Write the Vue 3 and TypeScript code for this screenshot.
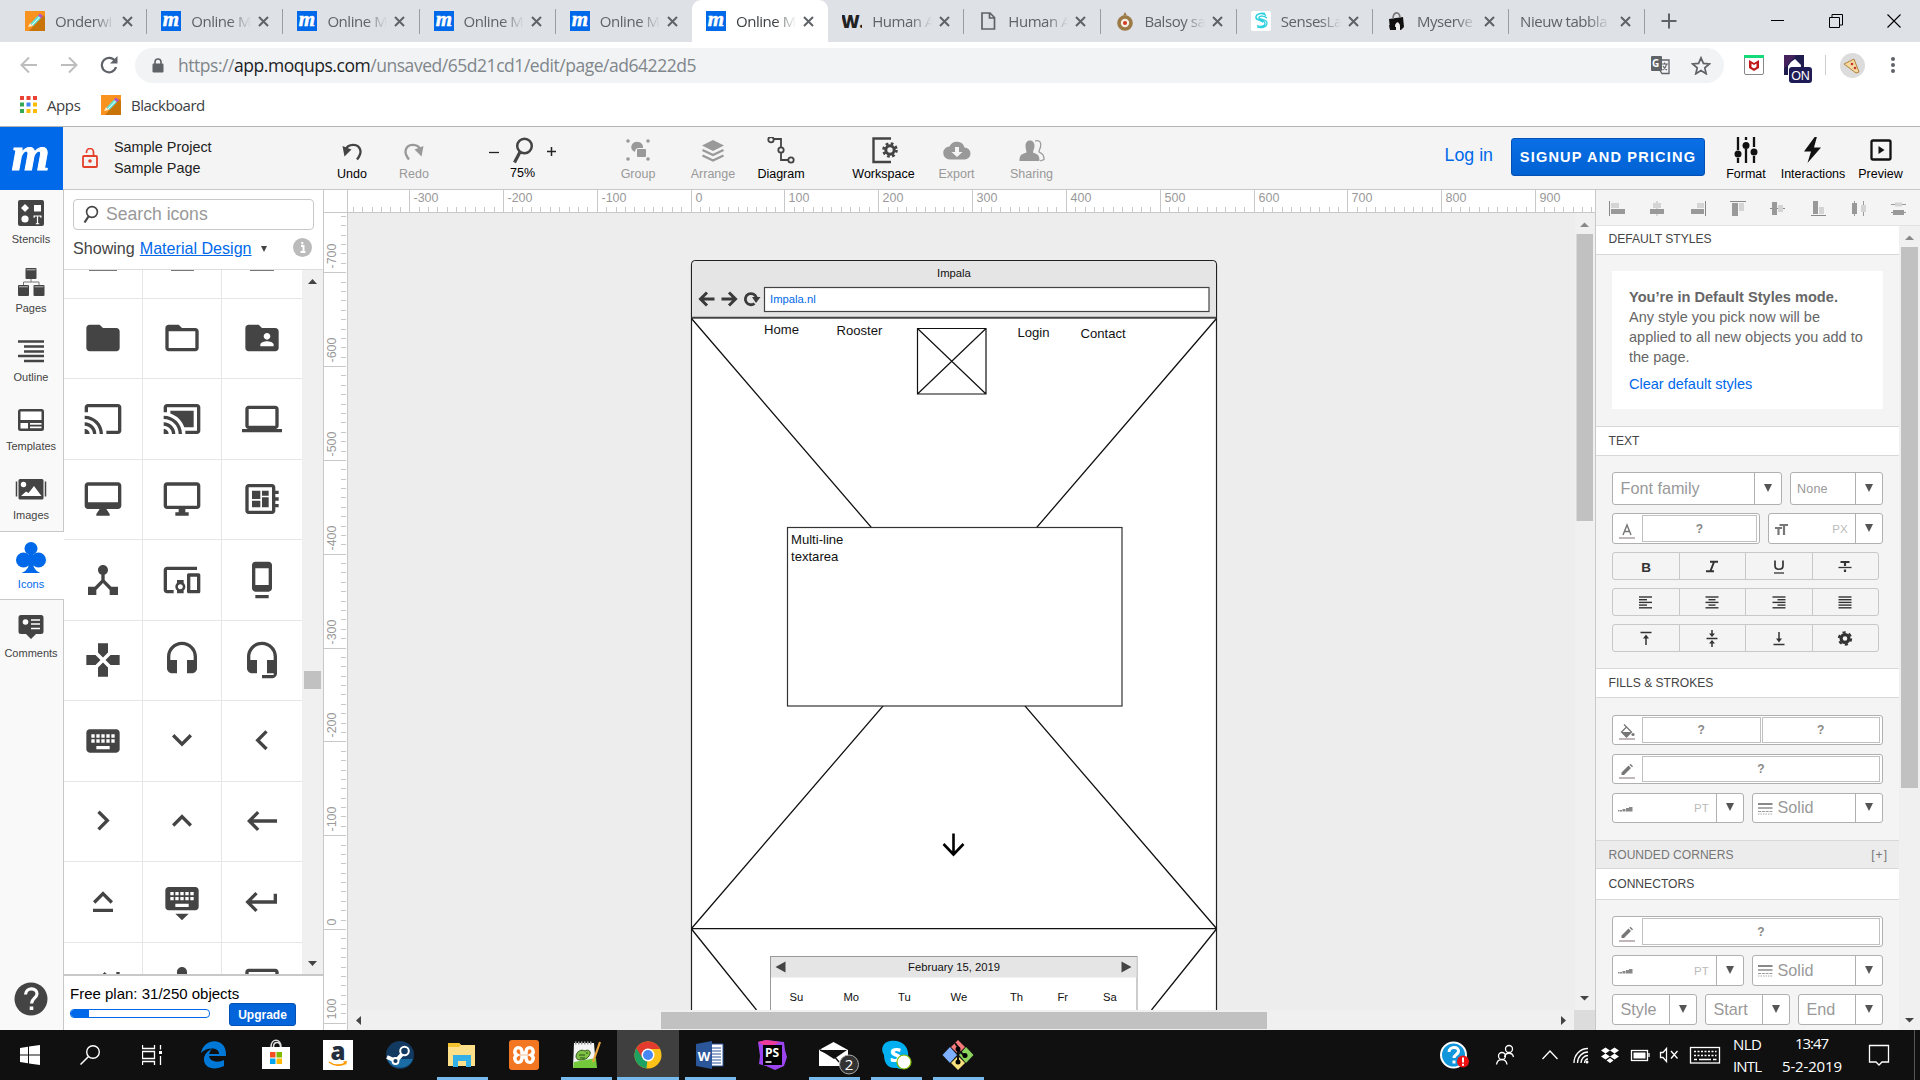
<script setup lang="ts">
interface Tab { title: string; icon: string; active?: boolean; line?: boolean }
interface Tool { key: string; label: string; icon: string; off?: boolean }

const mFav = '<rect width="20" height="20" fill="#0069ea"/><text x="10" y="15" text-anchor="middle" font-family="Liberation Serif" font-weight="700" font-style="italic" font-size="21" fill="#fff" stroke="#fff" stroke-width=".5">m</text>'
const pencilFav = '<rect width="20" height="20" fill="#f7931e"/><path d="M4 20 18 4l2 2v14z" fill="#c87408"/><path d="M3 16l2-4 3 3z" fill="#ffe9c4"/><path d="M5.5 12.500 13 4.500l3 2.800L8.300 15z" fill="#5fe0d8"/><path d="M7 14 15 5.500" stroke="#fff" stroke-width="1"/><path d="M13 4.500l2-2 3 2.500-2 2.300z" fill="#b455c9"/>'

const tabs: Tab[] = [
  { title: 'Onderwi', icon: pencilFav, line: true },
  { title: 'Online M', icon: mFav, line: true },
  { title: 'Online M', icon: mFav, line: true },
  { title: 'Online M', icon: mFav, line: true },
  { title: 'Online M', icon: mFav },
  { title: 'Online M', icon: mFav, active: true },
  { title: 'Human A', icon: '<text x="-1" y="17" font-family="Open Sans" font-weight="800" font-size="18" letter-spacing="-.5" fill="#222">W.</text>', line: true },
  { title: 'Human A', icon: '<path d="M4 2h8l4.500 4.500V18H4zM11.500 2v5h5" fill="none" stroke="#5f6368" stroke-width="1.700"/>', line: true },
  { title: 'Balsoy sa', icon: '<path d="M10 1l2 3.500h-4z" fill="#9c7a46"/><circle cx="10" cy="12" r="6" fill="#f5eee4" stroke="#9c7a46" stroke-width="3.600"/><circle cx="10" cy="12" r="2" fill="#d33a22"/>', line: true },
  { title: 'SensesLa', icon: '<rect width="20" height="20" rx="2" fill="#fff"/><path d="M15 4.500c-3-3-11-2-10 2 .5 3 9 2 9 6 0 3-5 3.500-8 2M16 7c-3-3-9-2-8 0 1 2 8 1 8 5 0 5-7 5-10 4M14 2.500c-5-1-10 1-9 5 1 2 6 2 7 4" fill="none" stroke="#2fd0df" stroke-width="1.300"/>', line: true },
  { title: 'Myserve', icon: '<path d="M2 8l14-2 1 10-3 3L3 18z" fill="#111"/><path d="M6 8c0-8 7-8 7-1" fill="none" stroke="#777" stroke-width="1.600"/><path d="M8 19v-4c1-5 4-5 5 0v4z" fill="#eee"/><path d="M2 14l7 2v3H3z" fill="#111"/>', line: true },
  { title: 'Nieuw tabbla', icon: '', line: true },
]

const tools: Tool[] = [
  { key: 'undo', label: 'Undo', icon: '<path d="M7 13.500C10 6 21 6 22.500 14c.3 3-1.500 6-3.500 8.500" fill="none" stroke="#444" stroke-width="2.300"/><path d="M4.500 9l9 3.500-7 7z" fill="#444"/>' },
  { key: 'redo', label: 'Redo', off: true, icon: '<path d="M21 13.500C18 6 7 6 5.500 14c-.3 3 1.500 6 3.500 8.500" fill="none" stroke="#999" stroke-width="2.300"/><path d="M23.500 9l-9 3.500 7 7z" fill="#999"/>' },
]
const midTools: Tool[] = [
  { key: 'group', label: 'Group', off: true, icon: '<path d="M14 5a5 5 0 0 1 5 5v1h-4a4 4 0 0 0-4 4 5 5 0 0 1 3-10z" fill="#999"/><rect x="13" y="12" width="9" height="8" rx="1" fill="#999"/><g fill="#999"><circle cx="4" cy="4" r="1.800"/><circle cx="24" cy="4" r="1.800"/><circle cx="4" cy="22" r="1.800"/><circle cx="24" cy="22" r="1.800"/></g>' },
  { key: 'arrange', label: 'Arrange', off: true, icon: '<path d="M14 3l11 5.500L14 14 3 8.500z" fill="#999"/><path d="M3.500 13l10.500 5L24.500 13M3.500 18.500l10.500 5 10.500-5" fill="none" stroke="#999" stroke-width="2.400"/>' },
  { key: 'diagram', label: 'Diagram', icon: '<path d="M6 2h8v21h8" fill="none" stroke="#444" stroke-width="1.800"/><g fill="#f4f4f4" stroke="#444" stroke-width="1.800"><circle cx="4" cy="2.700" r="2.700"/><circle cx="14" cy="13" r="2.700"/><circle cx="24" cy="23" r="2.700"/></g>' },
  { key: 'workspace', label: 'Workspace', icon: '<path d="M21 1.500H3.500v23.500H21" fill="none" stroke="#444" stroke-width="2.400"/><circle cx="20" cy="13" r="4.200" fill="none" stroke="#444" stroke-width="3"/><circle cx="20" cy="13" r="6.500" fill="none" stroke="#444" stroke-width="2.600" stroke-dasharray="2.700 2.400"/>' },
  { key: 'export', label: 'Export', off: true, icon: '<path d="M21.500 10.500A8 8 0 0 0 6.500 9.500 6.500 6.500 0 0 0 7 22.500h14.500a6 6 0 0 0 0-12z" fill="#999"/><path d="M12 10h4v5h3.500L14 20l-5.500-5H12z" fill="#f4f4f4"/>' },
  { key: 'sharing', label: 'Sharing', off: true, icon: '<path d="M17 4c5-1.500 6.500 2 5.500 6-.5 2-1.500 3-1.500 5 4 2 5 3 5 7.500l-4 1.500" fill="#f4f4f4" stroke="#999" stroke-width="1.200"/><path d="M7.500 9c-.5-7.500 9.500-7.500 9 0-.2 3-1.200 4-1.500 6.500 5.500 2 6.500 3 6.500 8.500h-20c0-5.500 1-6.500 7-8.500-.3-2.500-.8-3.500-1-6.500z" fill="#999"/>' },
]
const rightTools: Tool[] = [
  { key: 'format', label: 'Format', icon: '<path d="M6 0v13M6 21v5M14 0v3M14 12v14M22 0v10M22 19v7" stroke="#111" stroke-width="2.300"/><g fill="#111"><circle cx="6" cy="17" r="3.500"/><circle cx="14" cy="8.500" r="3.500"/><circle cx="22" cy="15" r="3.500"/></g>' },
  { key: 'interactions', label: 'Interactions', icon: '<path d="M16-.5 5 14.500h7L8.500 26 22 10.500h-7L18-.5z" fill="#111"/>' },
  { key: 'preview', label: 'Preview', icon: '<rect x="4.500" y="3.500" width="19" height="19" rx="1.500" fill="none" stroke="#111" stroke-width="2.300"/><path d="M11.500 9l6 4-6 4z" fill="#111"/>' },
]

const rail = [
  { label: 'Stencils', icon: '<rect x="3" y="2" width="26" height="26" rx="2" fill="#444"/><g fill="#fff"><path d="M10 6l4 4-4 4-4-4z"/><rect x="19" y="7" width="7" height="6.500"/><circle cx="10" cy="21" r="3.600"/><path d="M18.500 17.500h8v2.200h-1l-.5-1.200h-1.900v6.500l1.200.5v.8h-3.600v-.8l1.200-.5v-6.500H20l-.5 1.200h-1z"/></g>' },
  { label: 'Pages', icon: '<g fill="#444"><rect x="10.500" y="1" width="11" height="11" rx="1"/><rect x="3" y="18" width="11" height="11" rx="1"/><rect x="18.500" y="18" width="11" height="11" rx="1"/></g><path d="M16 12v3M8.500 18v-3h15.500v3" fill="none" stroke="#777" stroke-width="1"/><path d="M11.500 2.800h9M4 19.800h9M19.500 19.800h9" stroke="#ddd" stroke-width=".8"/>' },
  { label: 'Outline', icon: '<path d="M3 5.500h26M9 10.500h20M9 15.500h20M3 20h26M9 25h20" stroke="#444" stroke-width="2.400"/>' },
  { label: 'Templates', icon: '<rect x="3" y="4" width="26" height="22" rx="2.500" fill="#444"/><g fill="#fff"><rect x="5.500" y="6.500" width="21" height="8.500"/><rect x="5.500" y="18" width="7.500" height="5.500"/><rect x="15" y="18" width="11.500" height="1.700"/><rect x="15" y="21.500" width="11.500" height="1.700"/></g>' },
  { label: 'Images', icon: '<rect x="3.500" y="5" width="25" height="20.500" rx="1.500" fill="#444"/><path d="M1.500 7.500v15M30.500 7.500v15" stroke="#444" stroke-width="1.500"/><circle cx="8.500" cy="10.500" r="2.700" fill="#fff"/><path d="M6 22l5-4.500 2.500 1.500 5.500-7 7.500 10z" fill="#fff"/>' },
  { label: 'Icons', active: true, icon: '<g fill="#0069ea"><circle cx="16" cy="6.500" r="6.500"/><circle cx="8.500" cy="18" r="7.500"/><circle cx="23.500" cy="18" r="7.500"/><path d="M14 10h4l.5 14c1.500 4 3.500 5.500 7 7h-19c3.500-1.500 5.500-3 7-7z"/></g>' },
  { label: 'Comments', icon: '<path d="M6 3h20q2.500 0 2.500 2.500v14Q28.500 22 26 22h-5l-5 5-5-5H6q-2.500 0-2.500-2.500v-14Q3.500 3 6 3z" fill="#444"/><circle cx="10.500" cy="10" r="2.800" fill="#fff"/><path d="M16 8h9M16 12h9M16 16.500h9" stroke="#fff" stroke-width="1.300"/>' },
]

const glyphRows: string[][] = [
  [
    'M10 4H4c-1.100 0-1.990.9-1.990 2L2 18c0 1.100.9 2 2 2h16c1.100 0 2-.9 2-2V8c0-1.100-.9-2-2-2h-8l-2-2z',
    'M20 6h-8l-2-2H4c-1.100 0-1.990.9-1.990 2L2 18c0 1.100.9 2 2 2h16c1.100 0 2-.9 2-2V8c0-1.100-.9-2-2-2zm0 12H4V8h16v10z',
    'M20 6h-8l-2-2H4c-1.100 0-1.990.9-1.990 2L2 18c0 1.100.9 2 2 2h16c1.100 0 2-.9 2-2V8c0-1.100-.9-2-2-2zm-5 3c1.100 0 2 .9 2 2s-.9 2-2 2-2-.9-2-2 .9-2 2-2zm4 8h-8v-1c0-1.330 2.670-2 4-2s4 .67 4 2v1z',
  ],
  [
    'M21 3H3c-1.100 0-2 .9-2 2v3h2V5h18v14h-7v2h7c1.100 0 2-.9 2-2V5c0-1.100-.9-2-2-2zM1 18v3h3c0-1.660-1.340-3-3-3zm0-4v2c2.760 0 5 2.240 5 5h2c0-3.870-3.130-7-7-7zm0-4v2c4.970 0 9 4.030 9 9h2c0-6.080-4.930-11-11-11z',
    'M1 18v3h3c0-1.660-1.340-3-3-3zm0-4v2c2.760 0 5 2.240 5 5h2c0-3.870-3.130-7-7-7zm18-7H5v1.630c3.960 1.280 7.090 4.410 8.370 8.370H19V7zM1 10v2c4.970 0 9 4.030 9 9h2c0-6.080-4.930-11-11-11zm20-7H3c-1.100 0-2 .9-2 2v3h2V5h18v14h-7v2h7c1.100 0 2-.9 2-2V5c0-1.100-.9-2-2-2z',
    'M20 18c1.100 0 1.990-.9 1.990-2L22 6c0-1.100-.9-2-2-2H4c-1.100 0-2 .9-2 2v10c0 1.100.9 2 2 2H0v2h24v-2h-4zM4 6h16v10H4V6z',
  ],
  [
    'M21 2H3c-1.100 0-2 .9-2 2v12c0 1.100.9 2 2 2h7l-2 3v1h8v-1l-2-3h7c1.100 0 2-.9 2-2V4c0-1.100-.9-2-2-2zm0 12H3V4h18v10z',
    'M21 2H3c-1.100 0-2 .9-2 2v12c0 1.100.9 2 2 2h7v2H8v2h8v-2h-2v-2h7c1.100 0 2-.9 2-2V4c0-1.100-.9-2-2-2zm0 14H3V4h18v12z',
    'M22 9V7h-2V5c0-1.100-.9-2-2-2H4c-1.100 0-2 .9-2 2v14c0 1.100.9 2 2 2h14c1.100 0 2-.9 2-2v-2h2v-2h-2v-2h2v-2h-2V9h2zm-4 10H4V5h14v14zM6 13h5v4H6zm6-6h4v3h-4zM6 7h5v5H6zm6 4h4v6h-4z',
  ],
  [
    'M17 16l-4-4V8.820C14.160 8.400 15 7.300 15 6c0-1.660-1.340-3-3-3S9 4.340 9 6c0 1.300.84 2.400 2 2.820V12l-4 4H3v5h5v-3.050l4-4.200 4 4.200V21h5v-5h-4z',
    'M3 6h18V4H3c-1.100 0-2 .9-2 2v12c0 1.100.9 2 2 2h4v-2H3V6zm10 6H9v1.780c-.61.55-1 1.330-1 2.220s.39 1.670 1 2.220V20h4v-1.780c.61-.55 1-1.340 1-2.220s-.39-1.670-1-2.220V12zm-2 5.500c-.83 0-1.500-.67-1.500-1.500s.67-1.500 1.500-1.500 1.500.67 1.500 1.500-.67 1.500-1.500 1.500zM22 8h-6c-.5 0-1 .5-1 1v10c0 .5.5 1 1 1h6c.5 0 1-.5 1-1V9c0-.5-.5-1-1-1zm-1 10h-4v-8h4v8z',
    'M8 23h8v-2H8v2zm8-21.990L8 1c-1.100 0-2 .9-2 2v14c0 1.100.9 2 2 2h8c1.100 0 2-.9 2-2V3c0-1.100-.9-1.990-2-1.990zM16 15H8V5h8v10z',
  ],
  [
    'M15 7.500V2H9v5.500l3 3 3-3zM7.500 9H2v6h5.500l3-3-3-3zM9 16.500V22h6v-5.500l-3-3-3 3zM16.500 9l-3 3 3 3H22V9h-5.500z',
    'M12 1c-4.970 0-9 4.030-9 9v7c0 1.660 1.340 3 3 3h3v-8H5v-2c0-3.870 3.130-7 7-7s7 3.130 7 7v2h-4v8h3c1.660 0 3-1.340 3-3v-7c0-4.970-4.030-9-9-9z',
    'M12 1c-4.970 0-9 4.030-9 9v7c0 1.660 1.340 3 3 3h3v-8H5v-2c0-3.870 3.130-7 7-7s7 3.130 7 7v2h-4v8h4v1h-7v2h6c1.660 0 3-1.340 3-3V10c0-4.970-4.030-9-9-9z',
  ],
  [
    'M20 5H4c-1.100 0-1.990.9-1.990 2L2 17c0 1.100.9 2 2 2h16c1.100 0 2-.9 2-2V7c0-1.100-.9-2-2-2zm-9 3h2v2h-2V8zm0 3h2v2h-2v-2zM8 8h2v2H8V8zm0 3h2v2H8v-2zm-1 2H5v-2h2v2zm0-3H5V8h2v2zm9 7H8v-2h8v2zm0-4h-2v-2h2v2zm0-3h-2V8h2v2zm3 3h-2v-2h2v2zm0-3h-2V8h2v2z',
    'M7.410 7.840L12 12.420l4.590-4.580L18 9.250l-6 6-6-6z',
    'M15.410 16.090l-4.580-4.590 4.580-4.590L14 5.500l-6 6 6 6z',
  ],
  [
    'M8.590 16.340l4.580-4.590-4.580-4.590L10 5.750l6 6-6 6z',
    'M7.410 15.410L12 10.830l4.590 4.580L18 14l-6-6-6 6z',
    'M21 11H6.830l3.580-3.590L9 6l-6 6 6 6 1.410-1.410L6.830 13H21z',
  ],
  [
    'M12 8.410L16.590 13 18 11.590l-6-6-6 6L7.410 13 12 8.410zM6 18h12v-2H6v2z',
    'M20 3H4c-1.100 0-1.990.9-1.990 2L2 15c0 1.100.9 2 2 2h16c1.100 0 2-.9 2-2V5c0-1.100-.9-2-2-2zm-9 3h2v2h-2V6zm0 3h2v2h-2V9zM8 6h2v2H8V6zm0 3h2v2H8V9zm-1 2H5V9h2v2zm0-3H5V6h2v2zm9 7H8v-2h8v2zm0-4h-2V9h2v2zm0-3h-2V6h2v2zm3 3h-2V9h2v2zm0-3h-2V6h2v2zm-7 15l4-4H8l4 4z',
    'M19 7v4H5.830l3.580-3.590L8 6l-6 6 6 6 1.410-1.410L5.830 13H21V7z',
  ],
  [
    'M11.590 7.410L15.170 11H1v2h14.170l-3.590 3.590L13 18l6-6-6-6-1.410 1.410zM20 6v12h2V6h-2z',
    'M12 15c1.660 0 2.990-1.340 2.990-3L15 6c0-1.660-1.340-3-3-3S9 4.340 9 6v6c0 1.660 1.340 3 3 3z',
    'M20 18c1.100 0 1.990-.9 1.990-2L22 6c0-1.100-.9-2-2-2H4c-1.100 0-2 .9-2 2v10c0 1.100.9 2 2 2H0v2h24v-2h-4zM4 6h16v10H4V6z',
  ],
]

const step = 93.82
const hMajor = [-300, -200, -100, 0, 100, 200, 300, 400, 500, 600, 700, 800, 900].map(v => ({ v, x: Math.round(690.6 + v / 100 * step) + 0.5 }))
const hMinor = Array.from({ length: 133 }, (_, i) => Math.round(690.6 + (i - 36) * step / 10) + 0.5).filter(x => x > 350 && x < 1594)
const vMajor = [-700, -600, -500, -400, -300, -200, -100, 0, 100].map(v => ({ v, y: Math.round(929 + v / 100 * step) + 0.5 }))
const vMinor = Array.from({ length: 87 }, (_, i) => Math.round(929 + (i - 76) * step / 10) + 0.5).filter(y => y > 215 && y < 1029)

const weekdays = [
  { d: 'Su', x: 789.5 }, { d: 'Mo', x: 843.5 }, { d: 'Tu', x: 898 }, { d: 'We', x: 950.5 },
  { d: 'Th', x: 1010 }, { d: 'Fr', x: 1057.5 }, { d: 'Sa', x: 1103 },
]

const aligners = [
  '<path d="M.5 0v15" stroke="#888"/><rect x="2" y="2" width="8" height="5" fill="#d4d4d4"/><rect x="2" y="8" width="14" height="5" fill="#999"/>',
  '<path d="M8 0v15" stroke="#bbb"/><rect x="4" y="2" width="8" height="5" fill="#d4d4d4"/><rect x="1" y="8" width="14" height="5" fill="#999"/>',
  '<path d="M15.500 0v15" stroke="#888"/><rect x="7" y="2" width="7" height="5" fill="#d4d4d4"/><rect x="1" y="8" width="13" height="5" fill="#999"/>',
  '<path d="M0 .5h16" stroke="#888"/><rect x="2" y="2" width="6" height="13" fill="#999"/><rect x="9" y="2" width="5" height="8" fill="#d4d4d4"/>',
  '<path d="M0 7.500h15" stroke="#888"/><rect x="2" y="1" width="5" height="13" fill="#999"/><rect x="8" y="4" width="5" height="7" fill="#d4d4d4"/>',
  '<path d="M0 14.500h15" stroke="#888"/><rect x="2" y="0" width="5" height="13" fill="#999"/><rect x="8" y="6" width="5" height="7" fill="#d4d4d4"/>',
  '<path d="M3.500 0v15M12.500 0v15" stroke="#999"/><rect x="1" y="2" width="5" height="11" fill="#999"/><rect x="10" y="4" width="5" height="7" fill="#d4d4d4"/>',
  '<path d="M0 3.500h15M0 11.500h15" stroke="#999"/><rect x="4" y="1.500" width="7" height="4" fill="#d4d4d4"/><rect x="2" y="9" width="11" height="5" fill="#999"/>',
]
const lineSet = (w: number[], x: number[]) => w.map((n, i) => `<path d="M${x[i]} ${2 + i * 2.7}h${n}" stroke="#333" stroke-width="1.400"/>`).join('')
const textButtons: string[][] = [
  [
    '<text x="7" y="12.500" text-anchor="middle" font-family="Liberation Sans" font-weight="700" font-size="13.500" fill="#333">B</text>',
    '<path d="M5 2.700h8M1 12.200h8M9 3 5.500 12" fill="none" stroke="#333" stroke-width="2"/>',
    '<path d="M3 1.500v5c0 5 8 5 8 0v-5" fill="none" stroke="#333" stroke-width="1.700"/><path d="M2 14h10" stroke="#333" stroke-width="1.300"/>',
    '<path d="M2.500 3h9M7 3v4M7 10.500v2.500" stroke="#333" stroke-width="2.200"/><path d="M.5 8.500h13" stroke="#333" stroke-width="1.300"/>',
  ],
  [
    lineSet([13, 8, 13, 8, 13], [0, 0, 0, 0, 0]),
    lineSet([13, 7, 13, 7, 13], [0.5, 3.5, 0.5, 3.5, 0.5]),
    lineSet([13, 8, 13, 8, 13], [0.5, 5.5, 0.5, 5.5, 0.5]),
    lineSet([13, 13, 13, 13, 13], [0.5, 0.5, 0.5, 0.5, 0.5]),
  ],
  [
    '<path d="M1.500 1.500h11M7 14V5" stroke="#333" stroke-width="1.500"/><path d="M4 7.500l3-4 3 4z" fill="#333"/>',
    '<path d="M1.500 7.500h11M7-1v4M7 16v-4" stroke="#333" stroke-width="1.500"/><path d="M4 2.500l3 3.500 3-3.500zM4 12.500l3-3.500 3 3.500z" fill="#333"/>',
    '<path d="M1.500 13.500h11M7 1v8" stroke="#333" stroke-width="1.500"/><path d="M4 7.500l3 4 3-4z" fill="#333"/>',
    '<circle cx="7" cy="7.500" r="3.900" fill="none" stroke="#333" stroke-width="3.200"/><circle cx="7" cy="7.500" r="6.200" fill="none" stroke="#333" stroke-width="2" stroke-dasharray="3.200 3.290"/>',
  ],
]
const widthIcon = '<g fill="#888"><rect x="0" y="9" width="1.500" height="1.500"/><rect x="2" y="9" width="2" height="1.500"/><rect x="4.500" y="8" width="3" height="2.500"/><rect x="8" y="7" width="3" height="3.500"/><rect x="11" y="6" width="3.500" height="4.500"/></g>'
const dashIcon = '<path d="M0 3h14.500" stroke="#888" stroke-width="2"/><path d="M0 7h14.500" stroke="#aaa" stroke-width="2"/><path d="M0 10.500h14.500" stroke="#999" stroke-width="1.200" stroke-dasharray="3 .8"/><path d="M0 13h14.500" stroke="#aaa" stroke-dasharray="1.500 1"/>'
const penIcon = '<path d="M1.500 8.500l7-7 2.500 2.500-7 7H1.500zM9.500.7l1-1L13 2.200l-1 1z" fill="#777"/>'
const fillIcon = '<path d="M4-.5l7.500 7.500-5 5-5-5 5-5z" fill="none" stroke="#777" stroke-width="1.300"/><path d="M1.500 7h10l-5 5z" fill="#777"/><circle cx="13" cy="9.500" r="1.600" fill="#777"/>'

const apps = [
  { key: 'edge', icon: '<path d="M3 16C5 5 17 1 24 7c4 4 4 8 4 12H11c1 6 9 7 15 4v6C16 34 5 31 6 21c1-4 3-7 8-9-2 2-2 3-3 5h10c0-7-12-7-18-1z" fill="#0078d7"/>' },
  { key: 'store', icon: '<path d="M2 10h28v22H2z" fill="#fff"/><path d="M11 10c0-9 10-9 10 0M13.500 10c0-6 7-6 7 0" fill="none" stroke="#ddd" stroke-width="1.600"/><path fill="#f25022" d="M10 15h5.500v5.500H10z"/><path fill="#7fba00" d="M16.500 15H22v5.500h-5.500z"/><path fill="#00a4ef" d="M10 21.500h5.500V27H10z"/><path fill="#ffb900" d="M16.500 21.500H22V27h-5.500z"/>' },
  { key: 'amazon', icon: '<rect x="1" y="3" width="30" height="30" fill="#fff"/><text x="16" y="23" text-anchor="middle" font-family="Open Sans" font-weight="800" font-size="24" fill="#232f3e">a</text><path d="M7 25c5 4 12 4 17 1" fill="none" stroke="#f90" stroke-width="1.600"/><path d="M21 24.500l4-.5-1 4z" fill="#f90"/>' },
  { key: 'steam', icon: '<circle cx="16" cy="18" r="14" fill="#12395f"/><path d="M3 22a14 14 0 0 0 26 0z" fill="#1a6ca5"/><path d="M3 20l9 4 8-9" stroke="#fff" stroke-width="4" fill="none"/><circle cx="20.500" cy="14" r="4.300" fill="#12395f" stroke="#fff" stroke-width="2"/><circle cx="11.500" cy="24" r="3" fill="#12395f" stroke="#fff" stroke-width="1.800"/>' },
  { key: 'explorer', open: true, icon: '<path d="M2 6h11l2 2h14v21H2z" fill="#ffe08a"/><path d="M2 6h11l2 2-2 2H2z" fill="#f2c230"/><path d="M7 18h18v12h-5v-6h-8v6H7z" fill="#35b0e6"/>' },
  { key: 'xampp', icon: '<rect x="1" y="3" width="30" height="30" rx="3" fill="#f37623"/><path d="M12 11c-5-2-7 5-3 7-4 2-2 9 3 7 2-1 2-3 2-5h4c0 2 0 4 2 5 5 2 7-5 3-7 4-2 2-9-3-7-2 1-2 3-2 5h-4c0-2 0-4-2-5z" fill="none" stroke="#fff" stroke-width="3.400"/>' },
  { key: 'npp', open: true, icon: '<path d="M4 6h20l2 25H3z" fill="#f4f4f4"/><path d="M4 25l22-4 1 10H3z" fill="#74c93a"/><path d="M6 19c1-5 5-7 9-5 3-2 6 0 5 3-2 5-6 6-10 6-3 0-4-2-4-4z" fill="#7fc246" stroke="#33581a" stroke-width="1"/><path d="M9 18h6M16 16h2M10 21h5" stroke="#264d10" stroke-width="1.200"/><path d="M5 6h18" stroke="#999" stroke-width="3" stroke-dasharray="1.500 1.500"/><path d="M30 5l-7 20" stroke="#e8a33c" stroke-width="2.200"/>' },
  { key: 'chrome', open: true, current: true, icon: '<circle cx="16" cy="18" r="13.500" fill="#fbc116"/><path d="M16 18 4.300 11.200A13.500 13.500 0 0 0 14.500 31.400z" fill="#1da261"/><path d="M4.300 11.200A13.500 13.500 0 0 1 28 12H16l-5.500 9z" fill="#e33b2e"/><circle cx="16" cy="18" r="6.500" fill="#fff"/><circle cx="16" cy="18" r="5" fill="#4587f3"/>' },
  { key: 'word', open: true, icon: '<path d="M15 7h14v22H15z" fill="#fff" stroke="#2b579a"/><path d="M18 11h9M18 14h9M18 17h9M18 20h9M18 23h9M18 26h9" stroke="#2b579a" stroke-width="1.200"/><path d="M2 7l16-3v28L2 29z" fill="#2b579a"/><text x="10" y="23.500" text-anchor="middle" font-family="Open Sans" font-weight="700" font-size="13" fill="#fff">W</text>' },
  { key: 'ps', icon: '<path d="M2 5l8-2 18 2 1 8 2 7-3 9-9 4-9-4-7-2 1-8z" fill="#9b45f0"/><path d="M2 5l8-2 14 2-12 6z" fill="#ee3a9a"/><rect x="7" y="8" width="19" height="20" fill="#000"/><text x="16" y="20" text-anchor="middle" font-family="Open Sans" font-weight="700" font-size="12" fill="#fff">PS</text><path d="M9.500 25h6" stroke="#fff" stroke-width="1.500"/>' },
  { key: 'mail', open: true, icon: '<path d="M1 13 15.500 5 30 13v16H1z" fill="#fff"/><path d="M2 13h27l-13 9z" fill="#111"/><path d="M2 13l14 6 5 6" fill="none" stroke="#111" stroke-width="1.500"/><circle cx="31" cy="27.500" r="9.500" fill="#333" stroke="#aaa" stroke-width="1"/><text x="31" y="33" text-anchor="middle" font-family="Open Sans" font-size="15" fill="#fff">2</text>' },
  { key: 'skype', open: true, icon: '<path d="M10 4c11-2 20 5 18 17 1 9-6 13-11 10C7 32 4 25 4 18 0 12 3 5 10 4z" fill="#00aff0"/><text x="15.500" y="25" text-anchor="middle" font-family="Open Sans" font-weight="800" font-size="20" fill="#fff">S</text><circle cx="24" cy="25" r="7" fill="#fff" stroke="#7fba00" stroke-width="1.200"/>' },
  { key: 'git', open: true, icon: '<path d="M16 3l7 7-7 7-7-7z" fill="#f77a7a"/><path d="M24 10l7.500 8-7.500 8-7-8z" fill="#8bd35e"/><path d="M8 10l7 8-7 8-7.500-8z" fill="#7fb0ff"/><path d="M16 19l7 7-7 7-7-7z" fill="#f8e17a"/><path d="M13 6l3 4v14M16 13l7 6" stroke="#111" stroke-width="2" fill="none"/><circle cx="16" cy="12" r="2.500"/><circle cx="16" cy="25" r="2.500"/><circle cx="23" cy="18.500" r="2.500"/>' },
]
</script>

<template>
  <div class="screen">
    <div class="tabstrip">
      <div v-for="(t, i) in tabs" :key="i" class="tab" :class="{ active: t.active, divided: t.line }">
        <svg v-if="t.icon" class="fav" width="20" height="20" viewBox="0 0 20 20" v-html="t.icon" />
        <span class="tab-title" :class="{ bare: !t.icon }">{{ t.title }}</span>
        <svg class="tab-x" width="11" height="11" viewBox="0 0 11 11"><path d="M1 1l9 9M10 1l-9 9" stroke="#5f6368" stroke-width="2" /></svg>
      </div>
      <svg class="tab-new" width="16" height="16" viewBox="0 0 16 16"><path d="M8 0.500v15M0.500 8h15" stroke="#5f6368" stroke-width="2" /></svg>
      <div class="winbtns">
        <svg width="14" height="14" viewBox="0 0 14 14"><path d="M0 6.500h13" stroke="#000" /></svg>
        <svg width="14" height="14" viewBox="0 0 14 14"><path d="M.5 3.500h10v10H.5zM3 3V.500h10.500V11H11" fill="none" stroke="#000" /></svg>
        <svg width="14" height="14" viewBox="0 0 14 14"><path d="M.5.500l13 13M13.500.500l-13 13" stroke="#000" stroke-width="1.100" /></svg>
      </div>
    </div>

    <div class="navbar">
      <svg class="nav-i" width="18" height="18" viewBox="0 0 18 18"><path d="M17 9H2M9 1.500 1.500 9 9 16.500" fill="none" stroke="#bdbdbd" stroke-width="2" /></svg>
      <svg class="nav-i" width="18" height="18" viewBox="0 0 18 18"><path d="M1 9h15M9 1.500 16.500 9 9 16.500" fill="none" stroke="#bdbdbd" stroke-width="2" /></svg>
      <svg class="nav-i" width="18" height="18" viewBox="0 0 18 18"><path d="M15 5A7.200 7.200 0 1 0 16 11" fill="none" stroke="#5f6368" stroke-width="2.200" /><path d="M17.500 0v7.500H10z" fill="#5f6368" /></svg>
      <div class="omnibox">
        <svg width="12" height="15" viewBox="0 0 12 15"><path d="M3 6V4a3 3 0 0 1 6 0v2" fill="none" stroke="#5f6368" stroke-width="1.600" /><rect x="0.500" y="5.500" width="11" height="9" rx="1.200" fill="#5f6368" /></svg>
        <span class="url">https://<b>app.moqups.com</b>/unsaved/65d21cd1/edit/page/ad64222d5</span>
        <svg class="translate" width="19" height="19" viewBox="0 0 19 19"><rect x="0" y="0" width="11" height="15" rx="1" fill="#5f6368" /><path d="M10 4h8v13.500h-7l-2-3" fill="none" stroke="#5f6368" stroke-width="1.300" /><text x="1" y="11" font-family="Open Sans" font-weight="700" font-size="10" fill="#fff">G</text><path d="M10 8h7M13.500 6.500V8M15.500 8c-.5 3-2 5-4 6M12 10c1 2 2 3 4 4" fill="none" stroke="#5f6368" stroke-width="1.100" /></svg>
        <svg width="20" height="19" viewBox="0 0 20 19"><path d="M10 1.800l2.400 5.600 6 .5-4.600 4 1.400 5.900-5.200-3.200-5.200 3.200 1.400-5.900-4.600-4 6-.5z" fill="none" stroke="#5f6368" stroke-width="1.700" /></svg>
      </div>
      <svg class="ext1" width="20" height="20" viewBox="0 0 20 20"><rect x=".5" y=".5" width="19" height="19" rx="1.500" fill="#fff" stroke="#888" /><rect width="20" height="3" fill="#16d977" /><path d="M5 5l5 3 5-3v8l-5 3-5-3z" fill="#c01818" /><path d="M7.500 8.500v3.500l2.500 1.500 2.500-1.500V8.500L10 10z" fill="#fff" /></svg>
      <svg class="ext2" width="28" height="28" viewBox="0 0 28 28"><rect width="20" height="20" fill="#1f1c4e" /><path d="M0 0h12L0 14z" fill="#45225c" /><path d="M4 20V11l3-4 4-3 6 6-1 10z" fill="#fff" /><rect x="5" y="12" width="23" height="16" rx="3" fill="#1f1c55" /><text x="16.500" y="25" text-anchor="middle" font-family="Liberation Sans" font-size="12.500" fill="#fff">ON</text></svg>
      <span class="sep" />
      <svg class="avatar" width="25" height="25" viewBox="0 0 25 25"><circle cx="12.500" cy="12.500" r="12.500" fill="#dcdcdc" /><path d="M4 11 14 6l5 13-3 1z" fill="#f2d9a0" stroke="#b5823c" stroke-width="1" /><circle cx="12" cy="11" r="1.300" fill="#c33" /><circle cx="15" cy="15" r="1.300" fill="#c33" /></svg>
      <svg width="6" height="18" viewBox="0 0 6 18" fill="#5f6368"><circle cx="3" cy="3" r="2" /><circle cx="3" cy="9" r="2" /><circle cx="3" cy="15" r="2" /></svg>
    </div>

    <div class="bookmarks">
      <svg width="17" height="17" viewBox="0 0 17 17"><path fill="#ea4335" d="M0 0h4v4H0zM6.500 0h4v4h-4zM13 0h4v4h-4z" /><path fill="#34a853" d="M0 6.500h4v4H0zM0 13h4v4H0z" /><path fill="#4285f4" d="M6.500 6.500h4v4h-4z" /><path fill="#fbbc05" d="M13 6.500h4v4h-4zM6.500 13h4v4h-4zM13 13h4v4h-4z" /></svg>
      <span class="bm-apps">Apps</span>
      <svg width="20" height="20" viewBox="0 0 20 20" v-html="pencilFav" />
      <span class="bm-bb">Blackboard</span>
    </div>

    <header class="appbar">
      <div class="brand"><svg width="63" height="63" viewBox="0 0 63 63"><text x="30.500" y="42.500" text-anchor="middle" font-family="Liberation Serif" font-weight="700" font-style="italic" font-size="49" fill="#fff" stroke="#fff" stroke-width="1">m</text></svg></div>
      <svg class="lock" width="16" height="20" viewBox="0 0 16 20"><rect x="1" y="8" width="14" height="11" rx="1" fill="none" stroke="#e5402a" stroke-width="1.800" /><path d="M4.500 5V4a3.500 3.500 0 0 1 7 0v4" fill="none" stroke="#e5402a" stroke-width="1.700" /><circle cx="8" cy="13" r="1.800" fill="#e5402a" /></svg>
      <div class="project"><span>Sample Project</span><span>Sample Page</span></div>
      <div v-for="t in tools" :key="t.key" class="tool" :class="['t-' + t.key, { off: t.off }]"><svg width="28" height="28" viewBox="0 0 28 28" v-html="t.icon" /><span>{{ t.label }}</span></div>
      <div class="tool t-zoom">
        <div class="zoomrow">
          <svg width="10" height="26" viewBox="0 0 10 26"><path d="M0 14.500h10" stroke="#222" stroke-width="1.300" /></svg>
          <svg width="22" height="28" viewBox="0 0 22 28"><circle cx="12.500" cy="9" r="7.300" fill="none" stroke="#444" stroke-width="2.500" /><path d="M8 15 2.500 25.500" stroke="#444" stroke-width="3.200" /></svg>
          <svg width="10" height="26" viewBox="0 0 10 26"><path d="M0 13.500h9M4.500 9v9" stroke="#222" stroke-width="1.500" /></svg>
        </div>
        <span>75%</span>
      </div>
      <div v-for="t in midTools" :key="t.key" class="tool" :class="['t-' + t.key, { off: t.off }]"><svg width="28" height="28" viewBox="0 0 28 28" v-html="t.icon" /><span>{{ t.label }}</span></div>
      <span class="spacer" />
      <a class="login">Log in</a>
      <button class="signup">SIGNUP AND PRICING</button>
      <div v-for="t in rightTools" :key="t.key" class="tool" :class="'t-' + t.key"><svg width="28" height="28" viewBox="0 0 28 28" v-html="t.icon" /><span>{{ t.label }}</span></div>
    </header>

    <main class="work">
      <nav class="rail">
        <div v-for="r in rail" :key="r.label" class="rail-item" :class="{ on: r.active }">
          <svg width="32" height="32" viewBox="0 0 32 32" v-html="r.icon" /><span>{{ r.label }}</span>
        </div>
        <svg class="help" width="34" height="34" viewBox="0 0 34 34"><circle cx="17" cy="17" r="16.500" fill="#444" /><path d="M11.500 12.500c.5-8 12-7 11.500-.5-.3 4-5.500 4.500-5.500 9.500" fill="none" stroke="#fff" stroke-width="3.200" /><rect x="15.700" y="24.500" width="3.600" height="3.500" fill="#fff" /></svg>
      </nav>

      <aside class="icons">
        <div class="search"><svg width="16" height="19" viewBox="0 0 16 19"><circle cx="9" cy="7" r="5.400" fill="none" stroke="#444" stroke-width="1.600" /><path d="M5.500 11.500 1.500 17.500" stroke="#444" stroke-width="2.200" /></svg><span>Search icons</span></div>
        <div class="showing"><span>Showing</span><a>Material Design</a><i class="tri" /><svg width="19" height="19" viewBox="0 0 19 19"><circle cx="9.500" cy="9.500" r="9.500" fill="#bbb" /><path d="M8 8h2.500v5.500M7.500 14h5M9.300 4v2.300" stroke="#fff" stroke-width="2" fill="none" /></svg></div>
        <div class="listing">
          <div class="cells">
            <div class="row first"><span class="cell"><i class="w28" /></span><span class="cell"><i class="w23" /></span><span class="cell"><i class="w24" /></span></div>
            <div v-for="(row, i) in glyphRows" :key="i" class="row">
              <span v-for="(d, j) in row" :key="j" class="cell"><svg width="40" height="40" viewBox="0 0 24 24"><path :d="d" fill="#444" /></svg></span>
            </div>
          </div>
          <div class="bar">
            <svg width="21" height="704" viewBox="302 270 21 704"><path d="M308 284h9l-4.500-5z M308 961h9l-4.500 5z" fill="#444" /><rect x="304" y="671" width="17" height="18" fill="#c1c1c1" /></svg>
          </div>
        </div>
        <div class="plan">
          <span class="plan-text">Free plan: 31/250 objects</span>
          <div class="plan-row"><span class="meter"><i /></span><button>Upgrade</button></div>
        </div>
      </aside>

      <div class="vrule">
        <svg width="24" height="840" viewBox="324 190 24 840">
          <path d="M324 212.500h24M347.500 190v840" stroke="#c8c8c8" />
          <path v-for="m in vMinor" :key="m" :d="`M341 ${m}h5`" stroke="#c8c8c8" />
          <template v-for="m in vMajor" :key="m.v"><path :d="`M324 ${m.y}h22`" stroke="#c8c8c8" /><text :transform="`translate(336 ${m.y - 4}) rotate(-90)`">{{ m.v }}</text></template>
        </svg>
      </div>

      <section class="stage">
        <svg class="hrule" width="1247" height="23" viewBox="348 190 1247 23">
          <path v-for="m in hMinor" :key="m" :d="`M${m} 207v5`" stroke="#c8c8c8" />
          <template v-for="m in hMajor" :key="m.v"><path :d="`M${m.x} 190v22`" stroke="#c8c8c8" /><text :x="m.x + 4" y="202">{{ m.v }}</text></template>
          <path d="M348 212.500h1247" stroke="#c8c8c8" />
        </svg>
        <div class="canvas-row">
          <svg class="canvas" width="1227" height="797" viewBox="348 213 1227 797">
            <path d="M691.500 1012V265q0-4.500 4.500-4.500h516q4.500 0 4.500 4.500v747z" fill="#fff" stroke="#222" stroke-width="1.200" />
            <path d="M692 317V265q0-4 4-4h516q4 0 4 4v52z" fill="#e5e5e5" />
            <path d="M691.500 317.700h525" stroke="#444" stroke-width="2" />
            <rect x="764.500" y="287.500" width="444.500" height="24" fill="#fff" stroke="#444" stroke-width="1.200" />
            <g fill="none" stroke="#3a3a3a" stroke-width="3"><path d="M714.500 299H701M707 292.500l-6.500 6.500 6.500 6.500M721.500 299H735M729 292.500l6.500 6.500-6.500 6.500" /><path d="M754.500 303.500a5.600 5.600 0 1 1 1.800-6" stroke-width="2.800" /></g>
            <path d="M752 297h8.500l-4.500 6z" fill="#3a3a3a" />
            <text x="954" y="277" text-anchor="middle" class="s">Impala</text>
            <text x="770" y="303" class="s link">Impala.nl</text>
            <path d="M691.500 318.500 1216.500 928.500M1216.500 318.500 691.500 928.500M691.500 928.700h525M691.500 929l65 81M1216.500 929l-65 81" fill="none" stroke="#111" stroke-width="1.300" />
            <text x="764" y="334">Home</text><text x="836.500" y="335">Rooster</text><text x="1017.500" y="337">Login</text><text x="1080.500" y="338">Contact</text>
            <path d="M917.500 328.500h68.500v65.500h-68.500zM917.500 328.500l68.500 65.500M986 328.500l-68.500 65.500" fill="#fff" stroke="#111" stroke-width="1.200" />
            <rect x="787.500" y="527.500" width="334.500" height="178.500" fill="#fff" stroke="#333" stroke-width="1.200" />
            <text x="791" y="544">Multi-line</text><text x="791" y="561">textarea</text>
            <path d="M953.500 833.500v21M943.500 844l10 10.500 10-10.500" fill="none" stroke="#000" stroke-width="2.600" />
            <rect x="770.500" y="956.500" width="366.500" height="60" fill="#fff" stroke="#999" />
            <rect x="771" y="957" width="365.500" height="20.500" fill="#e5e5e5" />
            <path d="M785.500 961.500v11l-10-5.500zM1121.500 961.500v11l10-5.500z" fill="#444" />
            <text x="954" y="971" text-anchor="middle" class="s">February 15, 2019</text>
            <text v-for="w in weekdays" :key="w.d" :x="w.x" y="1001" class="s">{{ w.d }}</text>
          </svg>
          <svg width="20" height="797" viewBox="1575 213 20 797"><path d="M1575 213h20v797h-20z" fill="#f0f0f0" /><path d="M1580 227h9l-4.500-4.500z" fill="#888" /><path d="M1580 996h9l-4.500 4.500z" fill="#444" /><rect x="1576.500" y="234" width="16.500" height="287" fill="#c1c1c1" /></svg>
        </div>
        <svg width="1247" height="20" viewBox="348 1010 1247 20"><path d="M348 1010h1227v20H348z" fill="#f0f0f0" /><path d="M1574 1010h21v20h-21z" fill="#dcdcdc" /><path d="M361 1016v9l-5-4.500zM1561 1016v9l5-4.500z" fill="#444" /><rect x="661" y="1012" width="606" height="17" fill="#c1c1c1" /></svg>
      </section>

      <aside class="props">
        <div class="aligners"><svg v-for="(a, i) in aligners" :key="i" width="16" height="15" viewBox="0 0 16 15" v-html="a" /></div>
        <div class="props-row">
          <div class="props-col">
            <h3 class="h-first">DEFAULT STYLES</h3>
            <div class="card"><strong>You’re in Default Styles mode.</strong><p>Any style you pick now will be<br>applied to all new objects you add to<br>the page.</p><a>Clear default styles</a></div>
            <h3 class="h-text">TEXT</h3>
            <div class="line l-font"><div class="box w170"><span class="ph">Font family</span><b /></div><div class="box w93"><span class="ph small">None</span><b /></div></div>
            <div class="line l-color">
              <div class="box w148"><span class="pick"><svg width="14" height="12" viewBox="0 0 14 12"><path d="M3 11 7 1l4 10M4.500 7.500h5" fill="none" stroke="#777" stroke-width="1.400" /></svg></span><span class="sw">?</span></div>
              <div class="box w115"><svg class="ti" width="14" height="12" viewBox="0 0 14 12"><path d="M0 5h7M3.500 5v7M4.500 2H13M9 2v10" stroke="#777" stroke-width="2.200" /></svg><span class="unit">PX</span><b /></div>
            </div>
            <div v-for="(r, i) in textButtons" :key="i" class="seg"><span v-for="(b, j) in r" :key="j"><svg width="14" height="15" viewBox="0 0 14 15" v-html="b" /></span></div>
            <h3 class="h-fill">FILLS &amp; STROKES</h3>
            <div class="line l-fill"><div class="box full"><span class="pick"><svg width="15" height="12" viewBox="0 0 15 12" v-html="fillIcon" /></span><span class="sw">?</span><span class="sw">?</span></div></div>
            <div class="line l-stroke"><div class="box full"><span class="pick"><svg width="14" height="12" viewBox="0 0 14 12" v-html="penIcon" /></span><span class="sw">?</span></div></div>
            <div class="line l-pt"><div class="box w132"><svg class="wi" width="15" height="15" viewBox="0 0 15 15" v-html="widthIcon" /><span class="unit">PT</span><b /></div><div class="box w131"><svg class="wi" width="15" height="15" viewBox="0 0 15 15" v-html="dashIcon" /><span class="ph val">Solid</span><b /></div></div>
            <h3 class="h-round">ROUNDED CORNERS<em>[+]</em></h3>
            <h3 class="h-conn">CONNECTORS</h3>
            <div class="line l-conn"><div class="box full"><span class="pick"><svg width="14" height="12" viewBox="0 0 14 12" v-html="penIcon" /></span><span class="sw">?</span></div></div>
            <div class="line l-cpt"><div class="box w132"><svg class="wi" width="15" height="15" viewBox="0 0 15 15" v-html="widthIcon" /><span class="unit">PT</span><b /></div><div class="box w131"><svg class="wi" width="15" height="15" viewBox="0 0 15 15" v-html="dashIcon" /><span class="ph val">Solid</span><b /></div></div>
            <div class="line l-ends"><div class="box w85"><span class="ph">Style</span><b /></div><div class="box w85"><span class="ph">Start</span><b /></div><div class="box w85"><span class="ph">End</span><b /></div></div>
          </div>
          <svg width="21" height="804" viewBox="1899 226 21 804"><path d="M1899 226h21v804h-21z" fill="#f0f0f0" /><path d="M1905 240h9l-4.500-4.500z" fill="#888" /><path d="M1905 1018h9l-4.500 4.500z" fill="#444" /><rect x="1901" y="247" width="17" height="541" fill="#c1c1c1" /></svg>
        </div>
      </aside>
    </main>

    <footer class="taskbar">
      <span class="tk sys"><svg width="20" height="20" viewBox="0 0 20 20" fill="#fff"><path d="M0 3l8-1.200V9.500H0zM9 1.600 20 0v9.500H9zM0 10.500h8v7.700L0 17zM9 10.500h11V20L9 18.400z" /></svg></span>
      <span class="tk sys"><svg width="20" height="20" viewBox="0 0 20 20"><circle cx="13" cy="7" r="6.300" fill="none" stroke="#fff" stroke-width="1.400" /><path d="M8.500 11.500.500 19.500" stroke="#fff" stroke-width="1.500" /></svg></span>
      <span class="tk sys wide"><svg width="20" height="20" viewBox="0 0 20 20"><path d="M.5 0v3.500h12V0M.5 6.500h12v7H.5zM.5 20v-3.500h12V20M18.500 0v4.500M18.500 11v9" fill="none" stroke="#fff" stroke-width="1.300" /><path d="M17 6h3v3h-3z" fill="#fff" /></svg></span>
      <span v-for="a in apps" :key="a.key" class="tk" :class="{ open: a.open, current: a.current }"><svg width="32" height="36" viewBox="0 0 32 36" overflow="visible" v-html="a.icon" /></span>
      <span class="spacer" />
      <svg class="tray" width="490" height="50" viewBox="1430 1030 490 50" fill="none" stroke="#fff" stroke-width="1.300">
        <circle cx="1453.500" cy="1055" r="12.500" fill="#1296db" stroke-width="2" /><path d="M1449 1052c0-6 10-6 9.500-.5-.3 3-4.500 3-4.500 6.500" stroke-width="3" /><path d="M1452.500 1060.500h3v3h-3z" fill="#fff" stroke="none" /><circle cx="1463" cy="1061.500" r="6" fill="#e11" stroke="none" /><path d="M1463 1057.500v5M1463 1063.700v2" stroke-width="2" />
        <circle cx="1509" cy="1049" r="3.500" /><path d="M1504.500 1057c1-5 8-5 9 0" /><circle cx="1502" cy="1056" r="3.500" /><path d="M1496.500 1064.500c1-6.500 9.500-6.500 10.500 0" />
        <path d="M1542.500 1059l7.500-8 7.500 8" />
        <path d="M1574 1063c0-8 6-14.500 14-14.500M1577.500 1063c0-6 4.500-11 10.500-11M1581 1063c0-4 3-7.500 7-7.500M1584.500 1063c0-2 1.500-4 3.500-4" /><circle cx="1587" cy="1062" r="1.500" fill="#fff" stroke="none" />
        <path d="M1605.500 1047.500l4.500 3-4.500 3-4.500-3zM1614.500 1047.500l4.500 3-4.500 3-4.500-3zM1605.500 1053.500l4.500 3-4.500 3-4.500-3zM1614.500 1053.500l4.500 3-4.500 3-4.500-3zM1610 1058l3.500 2.500-3.500 2.500-3.500-2.500z" fill="#fff" stroke="none" />
        <rect x="1631.500" y="1050.500" width="16" height="10" /><path d="M1633.500 1052.500h12v6h-12z" fill="#fff" stroke="none" /><path d="M1649 1053v4" />
        <path d="M1660.500 1052.500h2.500l3.500-4v13l-3.500-4h-2.500zM1671 1051l6.500 7.500M1677.500 1051l-6.500 7.500" />
        <rect x="1690.500" y="1047.500" width="29" height="15.500" /><path d="M1694 1051.500h22.500M1694 1055.500h22.500" stroke-dasharray="2 1.500" /><path d="M1694 1059.500h3M1699 1059.500h12M1713 1059.500h3.500" />
        <g fill="#fff" stroke="none" class="tt"><text x="1733" y="1049.500" textLength="29">NLD</text><text x="1733" y="1072" textLength="29">INTL</text><text x="1795" y="1049" textLength="34">13:47</text><text x="1782" y="1072" textLength="60">5-2-2019</text></g>
        <path d="M1869.500 1045.500h19v16.500h-6.500l-3 3-3-3h-6.500z" /><path d="M1914.500 1030v50" stroke="#555" stroke-width="1" />
      </svg>
    </footer>
  </div>
</template>

<style>
body { margin: 0; overflow: hidden; }
</style>

<style scoped>
.screen { width: 1920px; height: 1080px; display: flex; flex-direction: column; overflow: hidden; background: #fff; font-family: "Liberation Sans", Arial, sans-serif; color: #000; }
.screen *, .screen { box-sizing: border-box; }
svg { flex: none; display: block; }
.spacer { flex: 1; }

.tabstrip { height: 42px; flex: none; display: flex; align-items: center; background: #dee1e6; padding-left: 11px; font-family: "Open Sans", sans-serif; }
.tab { width: 136.2px; height: 42px; display: flex; align-items: center; padding-left: 14px; position: relative; flex: none; }
.tab.divided::after { content: ""; position: absolute; right: 0; top: 9px; height: 25px; width: 1px; background: #9a9da2; }
.tab.active { background: #fff; border-radius: 9px 9px 0 0; }
.tab-title { width: 60px; margin-left: 10px; font-size: 15px; letter-spacing: -0.45px; color: #5f6368; white-space: nowrap; overflow: hidden; -webkit-mask-image: linear-gradient(90deg, #000 65%, transparent); mask-image: linear-gradient(90deg, #000 65%, transparent); flex: none; }
.tab.active .tab-title { color: #3c4043; }
.tab-title.bare { width: 90px; margin-left: -3px; margin-right: 3px; -webkit-mask-image: linear-gradient(90deg, #000 75%, transparent); mask-image: linear-gradient(90deg, #000 75%, transparent); }
.tab-x { margin-left: 7px; }
.tab-new { margin-left: 16px; }
.winbtns { display: flex; gap: 44px; margin-left: 94px; height: 37px; align-items: center; }

.navbar { height: 42px; flex: none; display: flex; align-items: center; padding-left: 20px; margin-top: 2px; }
.nav-i { margin-right: 22px; }
.omnibox { width: 1589px; height: 35px; border-radius: 18px; background: #f1f3f4; margin-left: -5px; display: flex; align-items: center; padding: 0 13px 0 17px; }
.url { font-family: "Open Sans", sans-serif; font-size: 17.5px; color: #80868b; margin-left: 14px; letter-spacing: -0.46px; white-space: nowrap; }
.url b { font-weight: 400; color: #202124; }
.translate { margin-left: auto; margin-right: 21px; }
.ext1 { margin-left: 20px; }
.ext2 { margin: 8px 0 0 20px; }
.sep { width: 1px; height: 20px; background: #ccc; margin: 0 14px 0 13px; }
.avatar { margin-right: 25px; }
.bookmarks { height: 41px; flex: none; display: flex; align-items: center; padding: 0 0 3px 20px; border-bottom: 1px solid #b4b4b4; font-family: "Open Sans", sans-serif; font-size: 15px; color: #3c4043; }
.bm-apps { margin: 0 20px 0 10px; width: 34px; letter-spacing: -0.4px; }
.bm-bb { margin-left: 10px; letter-spacing: -0.5px; }

.appbar { height: 63px; flex: none; display: flex; align-items: center; background: #f4f4f4; border-bottom: 1px solid #c8c8c8; }
.brand { width: 63px; height: 63px; background: #0069ea; align-self: flex-start; flex: none; }
.lock { margin-left: 19px; }
.project { margin-left: 16px; width: 207px; display: flex; flex-direction: column; font-size: 14.4px; line-height: 21px; color: #222; margin-top: -1px; }
.tool { display: flex; flex-direction: column; align-items: center; font-size: 12.5px; line-height: 14px; color: #000; padding-top: 1px; flex: none; }
.tool > span { margin-top: 2px; }
.tool.off { color: #999; }
.t-undo, .t-redo { width: 62px; }
.t-zoom { width: 155px; }
.zoomrow { display: flex; align-items: center; gap: 13px; }
.t-zoom > span { margin-top: 1px; }
.t-group { width: 76px; } .t-arrange { width: 74px; } .t-diagram { width: 62px; } .t-workspace { width: 83px; margin-left: 30px; } .t-export { width: 63px; } .t-sharing { width: 87px; }
.login { font-size: 17.8px; color: #0069ea; margin: -5px 18px 0 0; }
.signup { width: 194px; height: 38px; border: 1px solid #0451b5; border-radius: 3px; background: linear-gradient(#0a6fe6, #0061d2); color: #fff; font: bold 14.6px "Liberation Sans", sans-serif; letter-spacing: 1.15px; padding: 0; margin: -2px 10px 0 0; }
.t-format { width: 62px; } .t-interactions { width: 72px; } .t-preview { width: 63px; margin-right: 8px; }

.work { height: 840px; flex: none; display: flex; }
.rail { width: 64px; background: #f9f9f9; display: flex; flex-direction: column; align-items: stretch; flex: none; border-right: 1px solid #c8c8c8; height: 840px; }
.rail-item { height: 69px; display: flex; flex-direction: column; align-items: center; font-size: 11px; line-height: 13px; color: #444; padding: 8px 1px 0 0; flex: none; }
.rail-item span { margin-top: 3px; white-space: nowrap; }
.rail-item.on { background: #fff; color: #0069ea; margin-right: -1px; box-shadow: 0 -1px #c8c8c8, 0 1px #c8c8c8; height: 67px; margin-top: -3px; margin-bottom: 5px; padding: 10px 2px 0 0; }
.rail-item.on span { margin-top: 4px; }
.help { margin: auto 0 14px 14px; }

.icons { width: 260px; display: flex; flex-direction: column; flex: none; border-right: 1px solid #c8c8c8; background: #fff; }
.search { margin: 9px 9px 0; height: 31px; border: 1px solid #c8c8c8; border-radius: 4px; display: flex; align-items: center; gap: 7px; padding-left: 9px; font-size: 17.6px; color: #999; flex: none; }
.showing { height: 40px; display: flex; align-items: center; padding: 0 11px 2px 9px; font-size: 16.1px; color: #444; border-bottom: 1px solid #ddd; flex: none; }
.showing a { color: #0069ea; text-decoration: underline; margin-left: 5px; }
.showing .tri { border: 3px solid transparent; border-top: 6px solid #444; border-bottom: 0; margin-left: 9px; }
.showing svg { margin-left: auto; margin-top: -3px; }
.listing { height: 704px; display: flex; overflow: hidden; flex: none; }
.cells { width: 238px; flex: none; }
.row { display: flex; height: 80.5px; border-bottom: 1px solid #e6e6e6; }
.row.first { height: 28.500px; align-items: flex-start; }
.row.first i { height: 1px; background: #777; }
.w28 { width: 28px; } .w23 { width: 23px; } .w24 { width: 24px; }
.cell { width: 79px; display: flex; align-items: center; justify-content: center; border-right: 1px solid #e6e6e6; height: 100%; }
.row.first .cell { align-items: flex-start; }
.cell:last-child { border-right: 0; width: 80px; }
.bar { width: 21px; background: #f0f0f0; }
.plan { border-top: 2px solid #c8c8c8; padding: 8px 0 0 6px; height: 56px; flex: none; font-size: 15px; line-height: 20px; }
.plan-text { display: block; }
.plan-row { display: flex; align-items: flex-start; }
.meter { width: 140px; height: 9px; border: 1px solid #0069ea; border-radius: 4px; margin-top: 5px; overflow: hidden; }
.meter i { display: block; width: 18px; height: 100%; background: #0069ea; }
.plan button { margin: -1px 0 0 19px; width: 67px; height: 23px; border: 1px solid #0451b5; border-radius: 3px; background: #0465da; color: #fff; font: bold 12px "Liberation Sans", sans-serif; padding: 0; }

.vrule { width: 24px; flex: none; background: #fff; }
.vrule text, .hrule text { font-size: 12.500px; fill: #999; }
.stage { width: 1247px; flex: none; display: flex; flex-direction: column; }
.hrule { background: #fff; }
.canvas-row { display: flex; }
.canvas { background: #ededed; }
.canvas text { font-size: 13.100px; fill: #111; }
.canvas text.s { font-size: 11.250px; }
.canvas text.link { fill: #0069ea; }

.props { width: 325px; flex: none; background: #f4f4f4; border-left: 1px solid #c8c8c8; }
.aligners { height: 36px; display: flex; gap: 24.350px; padding: 11px 0 0 13px; border-bottom: 1px solid #e2e2e2; overflow: hidden; }
.props-row { display: flex; height: 804px; overflow: hidden; }
.props-col { width: 303px; flex: none; }
h3 { margin: 0; font-size: 12.100px; font-weight: 400; color: #444; background: #fff; border-bottom: 1px solid #d8d8d8; border-top: 1px solid #d8d8d8; height: 30px; line-height: 28px; padding-left: 12.5px; display: flex; }
h3 em { margin-left: auto; font-style: normal; margin-right: 11px; color: #777; letter-spacing: 1px; }
.h-first { border-top: 0; height: 29px; line-height: 27px; }
.h-text { margin-top: 17px; }
.h-fill { margin-top: 16px; }
.h-round { margin-top: 17px; background: #ececec; color: #777; height: 29px; }
.h-conn { border-top: 0; height: 31px; line-height: 30px; }
.card { background: #fff; margin: 16px 16px 0; width: 271px; height: 138px; padding: 16px 0 0 17px; font-size: 14.500px; line-height: 20px; color: #666; white-space: nowrap; }
.card strong { display: block; font-size: 14.600px; }
.card p { margin: 0 0 7px; }
.card a { color: #0069ea; }
.line { margin-left: 16px; width: 271px; display: flex; justify-content: space-between; height: 31px; }
.l-font { margin-top: 16px; height: 33px; }
.l-color { margin-top: 8px; }
.l-fill { margin-top: 17px; height: 30px; } .l-stroke { margin-top: 9px; height: 30px; } .l-pt { margin-top: 9px; height: 30px; }
.l-conn { margin-top: 16px; } .l-cpt, .l-ends { margin-top: 8px; }
.box { border: 1px solid #b0b0b0; border-radius: 3px; background: #fff; display: flex; align-items: center; height: 100%; }
.w170 { width: 170px; } .w93 { width: 93px; } .w148 { width: 148px; } .w115 { width: 115px; } .w132 { width: 132px; } .w131 { width: 131px; } .w85 { width: 85px; } .full { width: 271px; }
.box b { margin-left: auto; width: 27px; align-self: stretch; border-left: 1px solid #b0b0b0; display: flex; align-items: center; justify-content: center; flex: none; }
.box b::before { content: ""; border: 4px solid transparent; border-top: 8px solid #555; border-bottom: 0; margin-top: -2px; }
.ph { padding-left: 7.5px; font-size: 16.200px; color: #999; white-space: nowrap; margin-top: -1px; }
.ph.small { font-size: 12.500px; letter-spacing: .2px; padding-left: 6px; margin-top: 0; }
.ph.val { padding-left: 4.5px; }
.unit { margin-left: auto; margin-right: 7px; font-size: 11.5px; color: #bbb; letter-spacing: .2px; }
.unit + b { margin-left: 0; }
.ti { margin-left: 6px; } .wi { margin-left: 5px; }
.pick { width: 28px; align-self: stretch; flex: none; display: flex; flex-direction: column; align-items: center; justify-content: flex-end; padding-bottom: 4px; gap: 1px; }
.pick svg { overflow: visible; }
.pick::after { content: ""; width: 16px; height: 2px; background: #c0b8b8; }
.sw { flex: 1; margin: 1px 2px 1px 1px; align-self: stretch; border: 1px solid #c0c0c0; display: flex; align-items: center; justify-content: center; font-size: 12px; font-weight: 700; color: #888; }
.sw + .sw { margin-left: -1px; }
.seg { margin: 8px 0 0 16px; width: 267px; height: 28px; border: 1px solid #c8c8c8; border-radius: 3px; display: flex; }
.seg span { flex: 1; display: flex; align-items: center; justify-content: center; border-right: 1px solid #c8c8c8; }
.seg span:last-child { border-right: 0; }
.seg svg { overflow: visible; }

.taskbar { height: 50px; flex: none; background: #101010; display: flex; }
.tk { width: 62px; height: 50px; display: flex; align-items: center; justify-content: center; position: relative; flex: none; padding-bottom: 1px; }
.tk.sys { width: 60px; } .tk.wide { width: 63px; }
.tk.open::after { content: ""; position: absolute; left: 6px; right: 5px; bottom: 0; height: 3px; background: #76b9ed; }
.tk.current { background: #3f3f3f; }
.tk.current::after { left: 0; right: 0; }
.tt text { font-family: "Open Sans", sans-serif; font-size: 15px; }
</style>
